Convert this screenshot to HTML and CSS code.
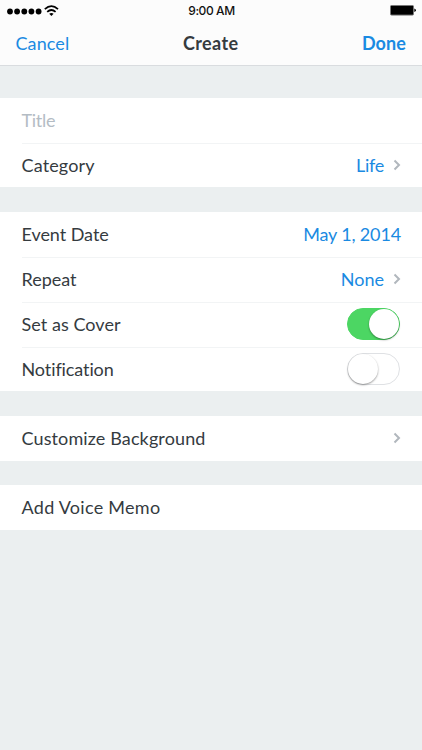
FILE: index.html
```html
<!DOCTYPE html>
<html lang="en">
<head>
<meta charset="utf-8">
<title>Create</title>
<link rel="stylesheet" href="styles.css">
</head>
<body>
<header class="header">
  <div class="status">
    <svg class="signal" width="54" height="14" viewBox="0 0 54 14">
      <circle cx="3" cy="7.5" r="2.9"/><circle cx="10.1" cy="7.5" r="2.9"/><circle cx="17.3" cy="7.5" r="2.9"/><circle cx="24.4" cy="7.5" r="2.9"/><circle cx="31.6" cy="7.5" r="2.9"/>
      <g fill="none" stroke="#000" stroke-width="1.7"><path d="M37.8 5.2Q44.4 -.8 51 5.2"/><path d="M40.2 7.9Q44.4 4.1 48.6 7.9"/></g>
      <path d="M42.2 9.8Q44.4 8 46.6 9.8L44.4 12.1Z"/>
    </svg>
    <span class="time">9:00 AM</span>
    <svg class="battery" width="26" height="11" viewBox="0 0 26 11">
      <rect x=".5" y=".5" width="23" height="9.6" rx="1" fill="#000" stroke="#777"/>
      <path d="M24.3 3.5Q26 4 26 5.3T24.3 7.1Z"/>
    </svg>
  </div>
  <nav class="nav">
    <a class="cancel">Cancel</a>
    <h1 class="heading">Create</h1>
    <a class="done">Done</a>
  </nav>
</header>
<main class="form">
  <section class="group">
    <div class="row"><span class="label placeholder">Title</span></div>
    <div class="row"><span class="label category">Category</span><span class="value life">Life</span><svg class="chevron" width="8" height="12" viewBox="0 0 8 12"><path d="M1.5 1.5L6 6L1.5 10.5"/></svg></div>
  </section>
  <section class="group">
    <div class="row"><span class="label event">Event Date</span><span class="value date">May 1, 2014</span></div>
    <div class="row"><span class="label repeat">Repeat</span><span class="value none">None</span><svg class="chevron" width="8" height="12" viewBox="0 0 8 12"><path d="M1.5 1.5L6 6L1.5 10.5"/></svg></div>
    <div class="row"><span class="label cover">Set as Cover</span><span class="switch on"><span class="knob"></span></span></div>
    <div class="row"><span class="label notification">Notification</span><span class="switch"><span class="knob"></span></span></div>
  </section>
  <section class="group">
    <div class="row"><span class="label customize">Customize Background</span><svg class="chevron" width="8" height="12" viewBox="0 0 8 12"><path d="M1.5 1.5L6 6L1.5 10.5"/></svg></div>
  </section>
  <section class="group">
    <div class="row"><span class="label memo">Add Voice Memo</span></div>
  </section>
</main>
</body>
</html>
```
FILE: styles.css
```css
* { box-sizing: border-box; }
body {
  margin: 0;
  min-height: 750px;
  background: #ebeff0;
  color: #353b3f;
  font: 18px/24px Lato, "Liberation Sans", sans-serif;
}
.header {
  height: 66px;
  background: #fcfcfc;
  border-bottom: 1px solid #d9dcdf;
}
.status {
  display: grid;
  grid-template-columns: 1fr auto 1fr;
  height: 22px;
  padding: 0 6px 0 7px;
  align-items: center;
}
.signal { margin-top: -1px; }
.time {
  color: #111;
  font: 500 12px/20px Inter, "Liberation Sans", sans-serif;
  letter-spacing: -.4px;
}
.battery { justify-self: end; margin-top: -1px; }
.nav {
  display: grid;
  grid-template-columns: 1fr auto 1fr;
  align-items: center;
  height: 41px;
  padding: 0 16px 0 15.5px;
}
.cancel, .done, .value { color: #1a8ae2; }
.cancel { letter-spacing: .1px; }
.heading {
  margin: 0;
  font-size: 18px;
  font-weight: 700;
  letter-spacing: .4px;
}
.done { justify-self: end; font-weight: 700; letter-spacing: .1px; }
.form {
  display: grid;
  gap: 24.5px;
  padding-top: 32px;
}
.group { background: #fff; }
.row {
  display: flex;
  align-items: center;
  height: 45px;
  margin-left: 21.5px;
  padding-right: 21px;
}
.row + .row { box-shadow: inset 0 1px #f2f4f5; }
.row + .row:last-child { height: 44.3px; }
.label { margin-right: auto; }
.placeholder {
  padding-bottom: 1px;
  color: #b4bcc4;
  letter-spacing: -.3px;
}
.category { letter-spacing: .15px; }
.event { letter-spacing: -.05px; }
.cover { letter-spacing: .05px; }
.notification { letter-spacing: -.1px; font-variant-ligatures: none; }
.customize { letter-spacing: .12px; }
.memo { padding-bottom: 1px; letter-spacing: .28px; }
.life { letter-spacing: -.3px; }
.date { letter-spacing: -.15px; }
.chevron { margin-left: 9px; }
.chevron path { fill: none; stroke: #b1b7bd; stroke-width: 2; }
.switch {
  display: flex;
  width: 53px;
  height: 32px;
  margin-right: 1px;
  border: 1px solid #dfe1e4;
  border-radius: 16px;
}
.switch.on {
  justify-content: flex-end;
  background: #4cd663;
  border-color: #4cd663;
}
.knob {
  width: 30px;
  height: 30px;
  border-radius: 50%;
  background: #fff;
  box-shadow: 0 1px 2px rgba(0, 0, 0, .4);
}
```
